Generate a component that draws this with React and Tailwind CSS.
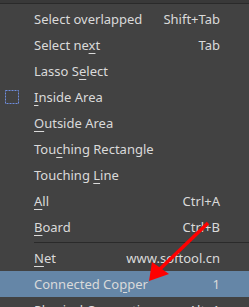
import React from 'react'

const rows = [
  { label: 'Select overlapped', key: 'Shift+Tab' },
  { label: 'Select next', u: 9, key: 'Tab' },
  { label: 'Lasso Select', u: 7 },
  { label: 'Inside Area', u: 0, icon: true },
  { label: 'Outside Area', u: 0 },
  { label: 'Touching Rectangle', u: 3 },
  { label: 'Touching Line', u: 9 },
  { label: 'All', u: 0, key: 'Ctrl+A' },
  { label: 'Board', u: 0, key: 'Ctrl+B' },
  { sep: true },
  { label: 'Net', u: 0, key: 'www.softool.cn' },
  { label: 'Connected Copper', u: 12, key: '1', active: true },
  { label: 'Physical Connection', key: 'Alt+1' }
]

const Label = ({ text, u }) => {
  if (u === undefined) return <span>{text}</span>
  return (
    <span>
      {text.slice(0, u)}
      <span className="underline underline-offset-[3px]">{text[u]}</span>
      {text.slice(u + 1)}
    </span>
  )
}

export default function App() {
  return (
    <div
      className="relative w-[249px] h-[307px] overflow-hidden bg-[#424242] text-[13px] text-[#dadada]"
      style={{ fontFamily: '"Noto Sans", "Liberation Sans", sans-serif' }}
    >
      <div className="h-[3px] bg-[#393939]" />
      <div className="h-px bg-[#2a2a2a]" />
      <div className="pt-[2px]">
        {rows.map((r, i) =>
          r.sep ? (
            <div key={i} className="h-[5px] flex items-center pl-[34px]">
              <div className="h-px w-full bg-[#2a2a2a]" />
            </div>
          ) : (
            <div
              key={i}
              className={`h-[26px] flex items-center ${r.active ? 'bg-[#6586a7]' : ''}`}
            >
              <div className="w-[34px] flex items-center pl-[5px]">
                {r.icon && (
                  <svg width="14" height="14" viewBox="0 0 14 14">
                    <rect
                      x="0.5"
                      y="0.5"
                      width="13"
                      height="13"
                      fill="none"
                      stroke="#6f8ee0"
                      strokeWidth="1"
                      strokeDasharray="2 1"
                    />
                  </svg>
                )}
              </div>
              <div className="flex-1 leading-none">
                <Label text={r.label} u={r.u} />
              </div>
              <div className="pr-[29px] leading-none">{r.key}</div>
            </div>
          )
        )}
      </div>

      {/* red arrow overlay */}
      <svg className="absolute left-0 top-0" width="249" height="307">
        <line x1="208" y1="223" x2="160" y2="269" stroke="#ff0000" strokeWidth="3.5" />
        <polygon points="149,281 152,262 169,274" fill="#ff0000" />
      </svg>
    </div>
  )
}
